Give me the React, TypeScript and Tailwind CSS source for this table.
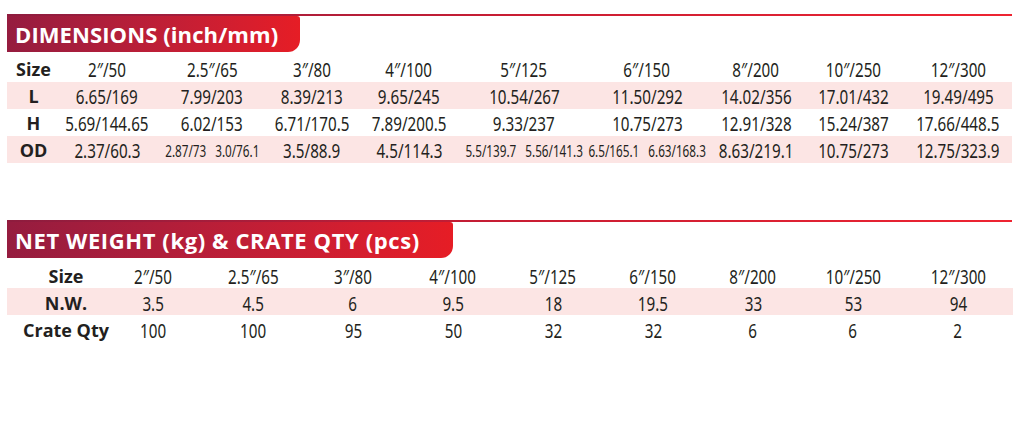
import React from "react";

const NARROW = "font-['Noto_Sans','DejaVu_Sans',sans-serif]";
const BOLD = "font-['Open_Sans',sans-serif] font-bold";

type Cell = string | [string, string];

const dimSizes = ["2\u2033/50", "2.5\u2033/65", "3\u2033/80", "4\u2033/100", "5\u2033/125", "6\u2033/150", "8\u2033/200", "10\u2033/250", "12\u2033/300"];

const dimRows: { label: string; cells: Cell[] }[] = [
  { label: "L", cells: ["6.65/169", "7.99/203", "8.39/213", "9.65/245", "10.54/267", "11.50/292", "14.02/356", "17.01/432", "19.49/495"] },
  { label: "H", cells: ["5.69/144.65", "6.02/153", "6.71/170.5", "7.89/200.5", "9.33/237", "10.75/273", "12.91/328", "15.24/387", "17.66/448.5"] },
  {
    label: "OD",
    cells: [
      "2.37/60.3",
      ["2.87/73", "3.0/76.1"],
      "3.5/88.9",
      "4.5/114.3",
      ["5.5/139.7", "5.56/141.3"],
      ["6.5/165.1", "6.63/168.3"],
      "8.63/219.1",
      "10.75/273",
      "12.75/323.9",
    ],
  },
];

const weightRows = [
  { label: "N.W.", cells: ["3.5", "4.5", "6", "9.5", "18", "19.5", "33", "53", "94"] },
  { label: "Crate Qty", cells: ["100", "100", "95", "50", "32", "32", "6", "6", "2"] },
];

const SectionHeader = ({ title, tabClass }: { title: string; tabClass: string }) => (
  <div>
    <div className="h-[2px] w-[1005px] bg-gradient-to-r from-[#8e1c3e] via-[#c81d33] to-[#ee2431]" />
    <div
      className={`flex h-[36px] items-center rounded-tr-[3px] rounded-br-[12px] bg-gradient-to-r from-[#951c3f] to-[#e61d25] pl-[8px] text-[22px] leading-none whitespace-nowrap text-white ${BOLD} ${tabClass}`}
    >
      {title}
    </div>
  </div>
);

// condensed look: the figures in the sheet are a narrow face
const Narrow = ({ children }: { children: React.ReactNode }) => (
  <span className="inline-block scale-x-[0.76] whitespace-nowrap">{children}</span>
);

const renderCell = (c: Cell) =>
  Array.isArray(c) ? (
    <span className="inline-flex shrink-0 scale-x-[0.69] items-center gap-[13px] text-[17px] whitespace-nowrap">
      <span>{c[0]}</span>
      <span>{c[1]}</span>
    </span>
  ) : (
    <Narrow>{c}</Narrow>
  );

export default function App() {
  return (
    <div className="h-[429px] w-[1024px] bg-white pl-[7px] pt-[14px] text-[#231f20]">
      <SectionHeader title="DIMENSIONS (inch/mm)" tabClass="w-[293px] tracking-[0.1px]" />
      <div className="mt-[3px] grid grid-cols-[53px_94px_116px_84px_110px_120px_126px_92px_102px_108px]">
        <div className={`flex h-[27px] items-center justify-center pt-[2px] text-[18px] ${BOLD}`}>Size</div>
        {dimSizes.map((s) => (
          <div key={s} className={`flex h-[27px] items-center justify-center pt-[2px] text-[20px] ${NARROW}`}>
            <Narrow>{s}</Narrow>
          </div>
        ))}
        {dimRows.map((row, i) => (
          <React.Fragment key={row.label}>
            <div
              className={`flex h-[27px] items-center justify-center pt-[2px] text-[18px] ${BOLD} ${i % 2 === 0 ? "bg-[#fce5e4]" : ""}`}
            >
              {row.label}
            </div>
            {row.cells.map((c, j) => (
              <div
                key={j}
                className={`flex h-[27px] min-w-0 items-center justify-center pt-[2px] text-[20px] ${NARROW} ${i % 2 === 0 ? "bg-[#fce5e4]" : ""}`}
              >
                {renderCell(c)}
              </div>
            ))}
          </React.Fragment>
        ))}
      </div>

      <div className="mt-[57px]">
        <SectionHeader title="NET WEIGHT (kg) & CRATE QTY (pcs)" tabClass="w-[446px] tracking-[0.6px]" />
        <div className="mt-[3px] grid grid-cols-[96px_repeat(8,100px)_110px]">
          <div className={`flex h-[27px] items-center justify-center pl-[22px] pt-[4px] text-[18px] ${BOLD}`}>Size</div>
          {dimSizes.map((s) => (
            <div key={s} className={`flex h-[27px] items-center justify-center pt-[4px] text-[20px] ${NARROW}`}>
              <Narrow>{s}</Narrow>
            </div>
          ))}
          {weightRows.map((row, i) => (
            <React.Fragment key={row.label}>
              <div
                className={`flex h-[27px] items-center justify-center whitespace-nowrap pl-[22px] pt-[4px] text-[18px] ${BOLD} ${i === 0 ? "bg-[#fce5e4]" : ""}`}
              >
                {row.label}
              </div>
              {row.cells.map((c, j) => (
                <div
                  key={j}
                  className={`flex h-[27px] items-center justify-center pt-[4px] text-[20px] ${NARROW} ${i === 0 ? "bg-[#fce5e4]" : ""}`}
                >
                  <Narrow>{c}</Narrow>
                </div>
              ))}
            </React.Fragment>
          ))}
        </div>
      </div>
    </div>
  );
}
